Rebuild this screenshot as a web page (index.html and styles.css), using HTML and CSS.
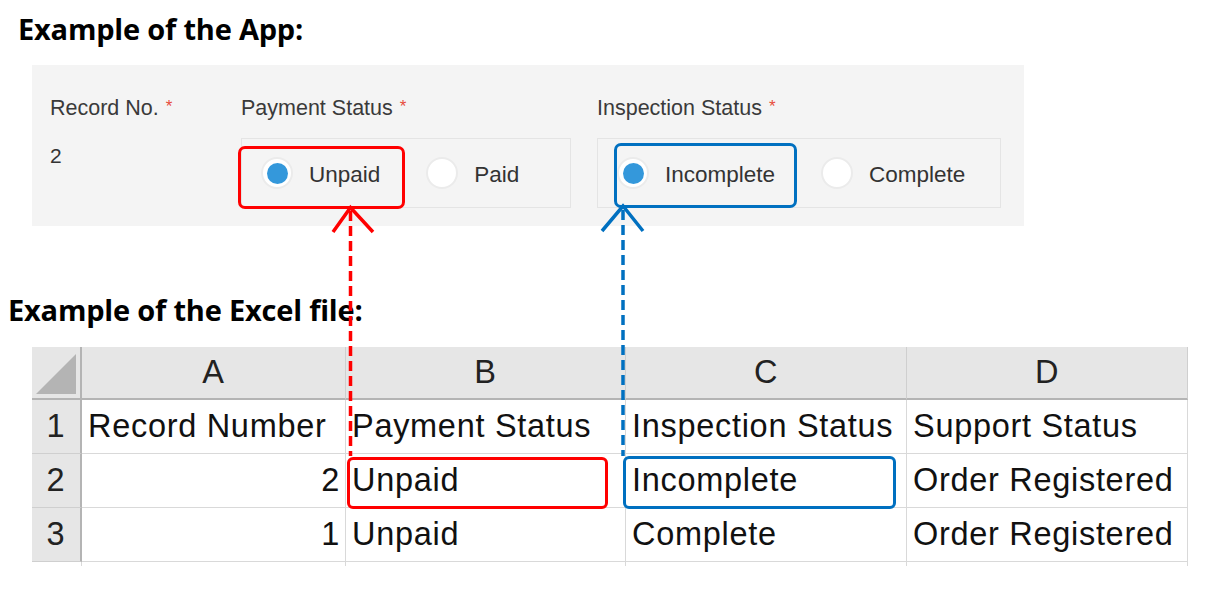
FILE: index.html
```html
<!DOCTYPE html>
<html lang="en">
<head>
<meta charset="utf-8">
<title>Example</title>
<link rel="stylesheet" href="styles.css">
</head>
<body>
<div class="page">
  <h1 class="title title-app">Example of the App:</h1>
  <div class="app-panel">
    <div class="field field-record">
      <div class="field-label">Record No.<span class="req">*</span></div>
      <div class="field-value">2</div>
    </div>
    <div class="field field-payment">
      <div class="field-label">Payment Status<span class="req">*</span></div>
      <div class="radios radios-payment">
        <div class="opt hl-red"><span class="radio checked"></span><span class="opt-text">Unpaid</span></div>
        <div class="opt"><span class="radio"></span><span class="opt-text">Paid</span></div>
      </div>
    </div>
    <div class="field field-inspection">
      <div class="field-label">Inspection Status<span class="req">*</span></div>
      <div class="radios radios-inspection">
        <div class="opt hl-blue"><span class="radio checked"></span><span class="opt-text">Incomplete</span></div>
        <div class="opt"><span class="radio"></span><span class="opt-text">Complete</span></div>
      </div>
    </div>
  </div>

  <h2 class="title title-excel">Example of the Excel file:</h2>
  <div class="sheet">
    <div class="cell corner"><span class="corner-tri"></span></div>
    <div class="cell col-head">A</div>
    <div class="cell col-head">B</div>
    <div class="cell col-head">C</div>
    <div class="cell col-head">D</div>

    <div class="cell row-head">1</div>
    <div class="cell">Record Number</div>
    <div class="cell">Payment Status</div>
    <div class="cell">Inspection Status</div>
    <div class="cell">Support Status</div>

    <div class="cell row-head">2</div>
    <div class="cell num">2</div>
    <div class="cell cell-hl-red">Unpaid</div>
    <div class="cell cell-hl-blue">Incomplete</div>
    <div class="cell">Order Registered</div>

    <div class="cell row-head">3</div>
    <div class="cell num">1</div>
    <div class="cell">Unpaid</div>
    <div class="cell">Complete</div>
    <div class="cell">Order Registered</div>

    <div class="cell stub"></div>
    <div class="cell stub"></div>
    <div class="cell stub"></div>
    <div class="cell stub"></div>
    <div class="cell stub"></div>
  </div>

  <svg class="arrows" width="1220" height="595" viewBox="0 0 1220 595">
    <line x1="350.5" y1="211" x2="350.5" y2="456" class="dash red"/>
    <polyline points="333,232 350.5,207.5 373,232" class="head red"/>
    <line x1="623" y1="210" x2="623" y2="456" class="dash blue"/>
    <polyline points="602,231 623,206 643,231" class="head blue"/>
  </svg>
</div>
</body>
</html>
```

FILE: styles.css
```css
html, body {
  margin: 0;
  padding: 0;
  background: #ffffff;
}

body {
  font-family: "Liberation Sans", Arial, sans-serif;
  color: #000;
}

.page {
  position: relative;
  width: 1220px;
  height: 595px;
  overflow: hidden;
  padding-top: 10px;
  box-sizing: border-box;
}

.title {
  margin: 0;
  font-family: "Open Sans", "Noto Sans", sans-serif;
  font-weight: 700;
  font-size: 29px;
  line-height: 38px;
  color: #000;
  letter-spacing: -0.2px;
}

.title-app {
  margin-left: 18px;
}

.title-excel {
  margin-left: 8px;
  margin-top: 65px;
}

/* ---------- App panel ---------- */
.app-panel {
  display: flex;
  margin-top: 17px;
  margin-left: 32px;
  width: 992px;
  height: 161px;
  box-sizing: border-box;
  padding: 30px 0 0 18px;
  background: #f4f4f4;
}

.field-record { width: 191px; }
.field-payment { width: 356px; }
.field-inspection { width: 404px; }

.field-label {
  font-size: 21.5px;
  line-height: 24px;
  color: #3a3a3a;
  white-space: nowrap;
}

.req {
  color: #e74c3c;
  font-size: 17px;
  margin-left: 7px;
  vertical-align: 3px;
}

.field-value {
  margin-top: 24px;
  font-size: 21px;
  line-height: 24px;
  color: #333;
}

.radios {
  margin-top: 18px;
  height: 70px;
  box-sizing: border-box;
  border: 1px solid #e4e4e4;
  display: flex;
  align-items: center;
  padding-left: 19px;
  gap: 46px;
}

.radios-payment { width: 330px; }
.radios-inspection { width: 404px; }

.opt {
  position: relative;
  display: flex;
  align-items: center;
  gap: 16px;
  font-size: 22.5px;
  line-height: 26px;
  color: #333;
}

.opt-text {
  padding-top: 3px;
}

.radio {
  width: 32px;
  height: 32px;
  box-sizing: border-box;
  border-radius: 50%;
  background: #ffffff;
  border: 2px solid #ebebeb;
  display: flex;
  align-items: center;
  justify-content: center;
  flex: none;
}

.radio.checked::before {
  content: "";
  width: 21px;
  height: 21px;
  border-radius: 50%;
  background: #3498db;
}

.hl-red::after,
.hl-blue::after {
  content: "";
  position: absolute;
  border: 3px solid;
  border-radius: 7px;
}

.hl-red::after {
  border-color: #ff0000;
  left: -23px;
  right: -25px;
  top: -11px;
  bottom: -20px;
}

.hl-blue::after {
  border-color: #0070c0;
  left: -3px;
  right: -22px;
  top: -14px;
  bottom: -19px;
}

/* ---------- Excel sheet ---------- */
.sheet {
  margin-top: 18px;
  margin-left: 32px;
  display: grid;
  grid-template-columns: 50px 264px 280px 281px 281px;
  grid-template-rows: 53px 54px 54px 54px 4px;
  width: 1156px;
}

.cell {
  position: relative;
  box-sizing: border-box;
  border-right: 1px solid #d9d9d9;
  border-bottom: 1px solid #d9d9d9;
  display: flex;
  align-items: center;
  padding-left: 6px;
  font-family: "Liberation Sans", Arial, sans-serif;
  font-size: 32.5px;
  letter-spacing: 0.7px;
  color: #111;
  white-space: nowrap;
}

.cell.num {
  justify-content: flex-end;
  padding-left: 0;
  padding-right: 5px;
}

.col-head {
  background: #e6e6e6;
  justify-content: center;
  padding-left: 0;
  border-right-color: #cfcfcf;
  border-bottom: 2px solid #b4b4b4;
  color: #222;
}

.corner {
  background: #e6e6e6;
  border-bottom: 2px solid #b4b4b4;
  border-right: 2px solid #b4b4b4;
  padding-left: 0;
}

.corner-tri {
  position: absolute;
  right: 4px;
  bottom: 4px;
  width: 0;
  height: 0;
  border-left: 40px solid transparent;
  border-bottom: 40px solid #b4b4b4;
}

.row-head {
  background: #e6e6e6;
  justify-content: center;
  padding-left: 0;
  border-right: 2px solid #b4b4b4;
  border-bottom-color: #cfcfcf;
  color: #222;
}

.stub {
  border-bottom: none;
}

.cell-hl-red::after,
.cell-hl-blue::after {
  content: "";
  position: absolute;
  border: 3px solid;
  border-radius: 6px;
}

.cell-hl-red::after {
  border-color: #ff0000;
  left: 1px;
  right: 17px;
  top: 3px;
  bottom: -2px;
}

.cell-hl-blue::after {
  border-color: #0070c0;
  left: -3px;
  right: 10px;
  top: 2px;
  bottom: -2px;
}

/* ---------- arrows overlay ---------- */
.arrows {
  position: absolute;
  left: 0;
  top: 0;
  pointer-events: none;
}

.arrows .dash {
  stroke-width: 3.5;
  stroke-dasharray: 10 5;
  fill: none;
}

.arrows .head {
  stroke-width: 3.5;
  fill: none;
}

.arrows .red { stroke: #ff0000; }
.arrows .blue { stroke: #0070c0; }
```
